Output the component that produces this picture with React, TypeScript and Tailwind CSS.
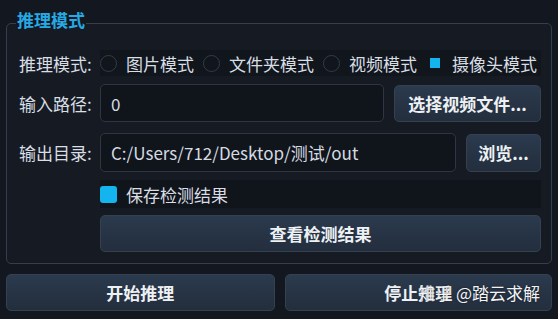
import React from "react"

const font = { fontFamily: '"Noto Sans CJK SC", "Noto Sans", sans-serif' }

function Radio({ label, checked }: { label: string; checked?: boolean }) {
  return (
    <div className="flex items-center gap-[9px]">
      <span className="flex h-[17px] w-[17px] items-center justify-center">
        {checked ? (
          <span className="h-[10px] w-[10px] bg-[#14b4ee]" />
        ) : (
          <span className="h-[17px] w-[17px] rounded-full border border-[#333b46]" />
        )}
      </span>
      <span>{label}</span>
    </div>
  )
}

function Btn({ children, className = "" }: { children: React.ReactNode; className?: string }) {
  return (
    <button
      className={`flex items-center justify-center rounded-[5px] border border-[#36414f] bg-gradient-to-b from-[#2b3a4e] to-[#232e3d] text-[17px] font-bold text-[#eef1f4] ${className}`}
    >
      {children}
    </button>
  )
}

export default function App() {
  return (
    <div
      className="flex h-[319px] w-[558px] flex-col bg-[#131820] px-[6px] text-[17px] leading-none text-[#d9dee4]"
      style={font}
    >
      {/* group box */}
      <div className="relative mt-[23px] flex h-[241px] flex-col rounded-[5px] border border-[#353e4a] bg-[#161b23] pb-[10px] pl-[12px] pr-[10px] pt-[26px]">
        <span className="absolute left-[9px] top-[-13px] bg-[#131820] px-[1px] text-[17px] font-bold text-[#27a9e3]">
          推理模式
        </span>

        <div className="flex h-[26px] items-center">
          <span className="w-[81px]">推理模式:</span>
          <div className="flex h-full flex-1 items-center gap-[9px] bg-[#11161d]">
            <Radio label="图片模式" />
            <Radio label="文件夹模式" />
            <Radio label="视频模式" />
            <Radio label="摄像头模式" checked />
          </div>
        </div>

        <div className="mt-[8px] flex h-[38px] items-center">
          <span className="w-[81px]">输入路径:</span>
          <div className="flex h-full flex-1 items-center rounded-[5px] border border-[#2e3641] bg-[#10151c] px-[10px] text-[#d6dbe1]">
            0
          </div>
          <Btn className="ml-[10px] h-[37px] w-[147px]">选择视频文件...</Btn>
        </div>

        <div className="mt-[11px] flex h-[39px] items-center">
          <span className="w-[81px]">输出目录:</span>
          <div className="flex h-full flex-1 items-center rounded-[5px] border border-[#2e3641] bg-[#10151c] px-[10px] text-[#d6dbe1]">
            C:/Users/712/Desktop/测试/out
          </div>
          <Btn className="ml-[10px] h-[38px] w-[75px]">浏览...</Btn>
        </div>

        <div className="mt-[8px] ml-[81px] flex h-[28px] items-center gap-[9px] bg-[#10141b]">
          <span className="h-[17px] w-[17px] rounded-[3px] bg-[#14b4ee]" />
          <span>保存检测结果</span>
        </div>

        <Btn className="mt-[7px] ml-[81px] h-[37px]">查看检测结果</Btn>
      </div>

      {/* bottom buttons */}
      <div className="relative mt-[10px] flex gap-[10px]">
        <Btn className="h-[37px] w-[269px]">开始推理</Btn>
        <Btn className="h-[37px] w-[268px]">停止推理</Btn>
        <span className="absolute right-[12px] top-[10px] text-[17px] text-[#f2f4f6] [text-shadow:0_0_2px_rgba(0,0,0,0.6)]">
          知乎 @踏云求解
        </span>
      </div>
    </div>
  )
}
